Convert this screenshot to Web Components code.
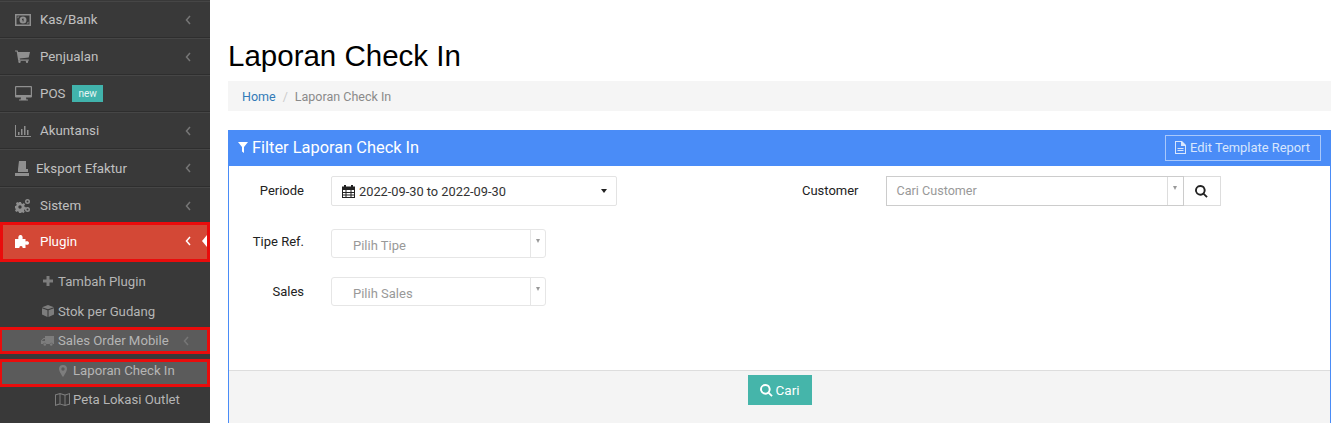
<!DOCTYPE html>
<html>
<head>
<meta charset="utf-8">
<title>Laporan Check In</title>
<style>
    html, body { margin: 0; height: 100%; overflow: hidden; background: #fff; }
    body { font-family: Roboto, "Liberation Sans", sans-serif; font-size: 13px; }
    app-shell { height: 423px; }
</style>
</head>
<body>

<app-shell>
    <side-bar slot="side">
        <side-item icon="money" label="Kas/Bank" arrow></side-item>
        <side-item icon="cart" label="Penjualan" arrow></side-item>
        <side-item icon="desktop" label="POS" badge="new"></side-item>
        <side-item icon="chart" label="Akuntansi" arrow></side-item>
        <side-item icon="export" label="Eksport Efaktur" arrow tight></side-item>
        <side-item icon="cogs" label="Sistem" arrow></side-item>
        <side-item icon="puzzle" label="Plugin" arrow active></side-item>
        <sub-item icon="plus" label="Tambah Plugin" style="margin-top:4px"></sub-item>
        <sub-item icon="cube" label="Stok per Gudang"></sub-item>
        <sub-item icon="truck" label="Sales Order Mobile" arrow marked style="margin-top:1px"></sub-item>
        <sub-item icon="pin" label="Laporan Check In" level="2" marked style="margin-top:5px"></sub-item>
        <sub-item icon="map" label="Peta Lokasi Outlet" level="2"></sub-item>
    </side-bar>
    <page-head title-text="Laporan Check In" crumb="Laporan Check In"></page-head>
    <filter-panel heading="Filter Laporan Check In">
        <div slot="left">
            <form-row label="Periode" gap="23"><date-range value="2022-09-30 to 2022-09-30"></date-range></form-row>
            <form-row label="Tipe Ref." gap="19" tight><pick-box text="Pilih Tipe"></pick-box></form-row>
            <form-row label="Sales"><pick-box text="Pilih Sales"></pick-box></form-row>
        </div>
        <div slot="right">
            <form-row label="Customer" wide><search-box text="Cari Customer"></search-box></form-row>
        </div>
    </filter-panel>
</app-shell>

<script>
const ICONS = {
    money: '<svg width="16" height="12" viewBox="0 0 16 12"><path fill-rule="evenodd" d="M0 0h16v12H0zM1.500 1.500v9h13v-9z"/><path fill-rule="evenodd" d="M8 2.500a3.500 3.500 0 1 1 0 7 3.500 3.500 0 0 1 0-7zM7 5v1h.6v1.600h1V4.400h-.8z"/><path d="M2.500 2.500h2l-2 2zM13.500 9.500h-2l2-2z"/></svg>',
    cart: '<svg width="15" height="13" viewBox="0 0 15 13"><path d="M0 .5h2.600l.5 1.500H15l-1.300 5.600-9 1 .3 1h8.800v1.100H3.200L1.700 1.600H0z"/><circle cx="4.500" cy="11.800" r="1.200"/><circle cx="12" cy="11.800" r="1.200"/></svg>',
    desktop: '<svg width="17" height="15" viewBox="0 0 17 15"><path fill-rule="evenodd" d="M1 0h15a1 1 0 0 1 1 1v9.500a1 1 0 0 1-1 1h-5l.4 2h1.600v1H4v-1h1.600l.4-2H1a1 1 0 0 1-1-1V1a1 1 0 0 1 1-1zm.2 1.200v7.800h14.600V1.200z"/></svg>',
    chart: '<svg width="16" height="12" viewBox="0 0 16 12"><path d="M0 0h1v11h15v1H0zM3 7h1.500v3H3zM6 4h1.500v6H6zM9 1h1.500v9H9zM12 5h1.500v5H12z"/></svg>',
    export: '<svg width="14" height="15" viewBox="0 0 14 15"><path d="M4 0h7v8l2 0v3H3V8zM0 12h14v3H0z"/><path d="M5 10 9 5v5z" opacity=".5"/></svg>',
    cogs: '<svg width="16" height="14" viewBox="0 0 16 14"><path fill-rule="evenodd" d="M4 3h2l.3 1.300 1.300.6L8.800 4l1.300 1.500-.9 1 .3 1.200 1.300.4v2l-1.300.3-.5 1.300.8 1.100-1.500 1.300-1-.8-1.300.4L6 14H4l-.3-1.300-1.300-.5-1.100.8L0 11.500l.8-1-.5-1.300L0 9V7l1.200-.3.5-1.300-.8-1.100L2.300 3l1.100.8zM5 6.300a1.700 1.700 0 1 0 0 3.400 1.700 1.700 0 0 0 0-3.400z"/><path fill-rule="evenodd" d="M12.500 0a2.500 2.500 0 1 1 0 5 2.500 2.500 0 0 1 0-5zm0 1.500a1 1 0 1 0 0 2 1 1 0 0 0 0-2zM12.500 8a2.500 2.500 0 1 1 0 5 2.500 2.500 0 0 1 0-5zm0 1.500a1 1 0 1 0 0 2 1 1 0 0 0 0-2z"/></svg>',
    puzzle: '<svg width="14" height="13" viewBox="0 0 14 13"><path d="M0 4h3.500C3 2.500 3.500 0 5.500 0S8 2.500 7.500 4H10.500v2.500c1-.6 3.500-.6 3.500 1.500s-2.500 2-3.500 1.500V13H7.500c.5-1-.2-2-1.500-2s-2 1-1.500 2H0z"/></svg>',
    plus: '<svg width="10" height="10" viewBox="0 0 10 10"><path d="M3.500 0h3v3.500H10v3H6.500V10h-3V6.500H0v-3h3.500z"/></svg>',
    cube: '<svg width="12" height="12" viewBox="0 0 11 11"><path d="M5.500 0 11 2 5.500 4 0 2zM0 3l5 1.800V11L0 8.800zM11 3 6 4.800V11l5-2.200z"/></svg>',
    truck: '<svg width="13" height="10" viewBox="0 0 13 10"><path d="M4 0h9v8h-1.200a1.600 1.600 0 0 0-3.100 0H5.300a1.600 1.600 0 0 0-3.100 0H0V4.500L2.500 2H4zM1 4.800V5h3V3H2.800z"/><circle cx="3.800" cy="8.500" r="1.300"/><circle cx="10.200" cy="8.500" r="1.300"/></svg>',
    pin: '<svg width="8" height="12" viewBox="0 0 8 12"><path fill-rule="evenodd" d="M4 0a4 4 0 0 1 4 4c0 2-2.500 6-4 8-1.500-2-4-6-4-8a4 4 0 0 1 4-4zm0 2.300a1.700 1.700 0 1 0 0 3.400 1.700 1.700 0 0 0 0-3.400z"/></svg>',
    map: '<svg width="15" height="13" viewBox="0 0 15 13"><path fill-rule="evenodd" d="M0 1.500 5 0l5 1.500L15 0v11.500L10 13l-5-1.500L0 13zM1 2.300v9.300l3.500-1V1.300zm4.500-1v9.400l4 1.100V2.400zm5 1.100v9.300l3.500-1V1.300z"/></svg>'
};
const SEARCH = '<svg width="13" height="13" viewBox="0 0 13 13"><path fill="currentColor" fill-rule="evenodd" d="M5.300 0a5.300 5.300 0 0 1 4.300 8.400l3.100 3.100-1.300 1.300-3.100-3.100A5.300 5.300 0 1 1 5.300 0zm0 1.900a3.400 3.400 0 1 0 0 6.800 3.400 3.400 0 0 0 0-6.800z"/></svg>';
const ARROW = '<svg class="arrow" width="6" height="10" viewBox="0 0 6 10"><path d="M5 1 1.500 5 5 9" fill="none" stroke="currentColor" stroke-width="1.500"/></svg>';

function make(tag, html) {
    customElements.define(tag, class extends HTMLElement {
        connectedCallback() {
            if (this.shadowRoot) return;
            this.attachShadow({ mode: 'open' }).innerHTML = html(this);
        }
    });
}

customElements.define('app-shell', class extends HTMLElement {
    constructor() {
        super();
        this.attachShadow({ mode: 'open' }).innerHTML = `
            <style>
                :host { display: flex; }
                .side { flex: 0 0 210px; }
                .main { flex: 1; min-width: 0; padding-left: 18px; display: flex; flex-direction: column; }
            </style>
            <div class="side"><slot name="side"></slot></div>
            <div class="main"><slot></slot></div>`;
    }
});

make('side-bar', () => `
    <style>
        :host { display: block; height: 423px; background: #393939; padding-top: 1px; box-sizing: border-box; overflow: hidden; }
    </style>
    <slot></slot>`);

make('side-item', el => `
    <style>
        :host { display: block; }
        :host([tight]) .row { height: 36px; }
        .row {
            height: 35px; display: flex; align-items: center; color: #c0c0c0; font-size: 13.300px;
            border-bottom: 1px solid #2e2e2e; border-top: 1px solid #464646; padding-left: 15px; position: relative;
        }
        .icon { width: 25px; display: flex; color: #8f8f8f; }
        .icon svg { fill: currentColor; }
        :host([tight]) .icon { width: 21px; }
        .label { flex: 1; display: flex; align-items: center; }
        .badge { background: #41b3ac; color: #e6f5f4; font-size: 10px; height: 17px; line-height: 18px; padding: 0 6px; margin-left: 7px; }
        .arrow { color: #767676; margin-right: 19px; }
        :host([active]) .row {
            height: 32px; padding-bottom: 2px; margin-top: -2px; background: #d34836; color: #fff; border: 3px solid #e90c0c; padding-left: 12px;
        }
        :host([active]) .row .icon { color: #fff; }
        :host([active]) .row .arrow { color: #fff; margin-right: 16px; }
        .notch { position: absolute; right: 0; top: 10px; border-right: 5px solid #fff; border-top: 6px solid transparent; border-bottom: 6px solid transparent; }
    </style>
    <div class="row">
        <span class="icon">${ICONS[el.getAttribute('icon')]}</span>
        <span class="label">${el.getAttribute('label')}${el.hasAttribute('badge') ? `<span class="badge">${el.getAttribute('badge')}</span>` : ''}</span>
        ${el.hasAttribute('arrow') ? ARROW : ''}
        ${el.hasAttribute('active') ? '<i class="notch"></i>' : ''}
    </div>`);

make('sub-item', el => {
    const deep = el.getAttribute('level') === '2';
    return `
    <style>
        :host { display: block; }
        .row { height: ${deep ? 25 : 30}px; box-sizing: border-box; display: flex; align-items: center; color: #b5b5b5; font-size: 13.200px; padding-left: ${deep ? 52 : 37}px; }
        :host([marked]) .row { height: ${deep ? 28 : 27}px; background: #5b5b5b; border: 3px solid #e90c0c; border-left-width: 2px; padding-left: ${deep ? 50 : 35}px; ${deep ? 'padding-bottom: 5px;' : ''} }
        .icon { width: 21px; display: flex; justify-content: center; color: #7d7d7d; }
        .icon svg { fill: currentColor; }
        .label { flex: 1; }
        .arrow { color: #767676; margin-right: 18px; }
    </style>
    <div class="row">
        <span class="icon">${ICONS[el.getAttribute('icon')]}</span>
        <span class="label">${el.getAttribute('label')}</span>
        ${el.hasAttribute('arrow') ? ARROW : ''}
    </div>`;
});

make('page-head', el => `
    <style>
        :host { display: block; padding-top: 39px; }
        h1 { margin: 0 0 8px; font: 400 29.500px/34px "Liberation Sans", sans-serif; color: #000; }
        ol { margin: 0; padding: 0 14px; height: 30px; list-style: none; display: flex; align-items: center; background: #f5f5f5; color: #8a8a8a; font-size: 12.500px; }
        a { color: #337ab7; text-decoration: none; }
        .sep { color: #ccc; padding: 0 7px; }
    </style>
    <h1>${el.getAttribute('title-text')}</h1>
    <ol><li><a href="#">Home</a></li><li class="sep">/</li><li>${el.getAttribute('crumb')}</li></ol>`);

make('filter-panel', el => `
    <style>
        :host { display: block; margin-top: 19px; border: 1px solid #4a8cf7; border-top: 0; border-bottom: 0; flex: 1; }
        header { height: 36px; margin: 0 -1px; background: #4a8cf7; display: flex; align-items: center; color: #fff; padding: 0 10px; font-size: 16.400px; }
        .title { flex: 1; display: flex; align-items: center; gap: 4px; padding-bottom: 2px; }
        .tpl { display: flex; align-items: center; gap: 4px; height: 26px; box-sizing: border-box; padding-bottom: 1px; border: 1px solid #a9c8fb; color: #d8e6fd; font-size: 12.900px; padding-left: 9px; padding-right: 10px; }
        .body { height: 204px; box-sizing: border-box; padding-top: 10px; display: grid; grid-template-columns: 1fr 1fr; }
        footer { background: #f4f4f4; border-top: 1px solid #ddd; height: 60px; display: flex; justify-content: center; padding-top: 4px; box-sizing: border-box; }
        button { height: 30px; width: 64px; border: 0; background: #45b5aa; color: #fff; font: 13.500px Roboto, sans-serif; display: flex; align-items: center; justify-content: center; gap: 3px; padding: 0; }
    </style>
    <header>
        <span class="title">
            <svg width="10" height="11" viewBox="0 0 10 11"><path fill="#fff" d="M0 0h10L6 5v6L4 9.500V5z"/></svg>
            ${el.getAttribute('heading')}
        </span>
        <span class="tpl">
            <svg width="11" height="13" viewBox="0 0 11 13"><path fill="currentColor" fill-rule="evenodd" d="M0 0h7l4 4v9H0zm1 1v11h9V5H6V1zm1.500 6h6v1h-6zm0 2h6v1h-6z"/></svg>
            Edit Template Report
        </span>
    </header>
    <div class="body">
        <slot name="left"></slot>
        <slot name="right"></slot>
    </div>
    <footer><button>${SEARCH}Cari</button></footer>`);

make('form-row', el => `
    <style>
        :host { display: grid; grid-template-columns: ${el.hasAttribute('wide') ? '79px' : '75px'} 1fr; column-gap: 27px; margin-bottom: ${el.getAttribute('gap') || 0}px; }
        label { text-align: right; color: #222; font-size: 13px; line-height: ${el.hasAttribute('tight') ? 26 : 29}px; height: 29px; }
    </style>
    <label>${el.getAttribute('label')}</label>
    <div><slot></slot></div>`);

make('date-range', el => `
    <style>
        :host { display: flex; width: 286px; height: 30px; box-sizing: border-box; align-items: center; border: 1px solid #e3e3e3; border-radius: 2px; padding: 0 9px 0 10px; color: #333; font-size: 12.800px; gap: 4px; }
        svg { flex: none; }
        span { flex: 1; }
        i { border-top: 4px solid #222; border-left: 3px solid transparent; border-right: 3px solid transparent; }
    </style>
    <svg width="13" height="13" viewBox="0 0 13 13"><path fill="#222" fill-rule="evenodd" d="M2 0h2v1.500h5V0h2v1.500h2V13H0V1.500h2zM1 5v2h2.500V5zm3.500 0v2h4V5zm5 0v2H12V5zM1 8v1.500h2.500V8zm3.500 0v1.500h4V8zm5 0v1.500H12V8zM1 10.500V12h2.500v-1.500zm3.500 0V12h4v-1.500zm5 0V12H12v-1.500z"/></svg>
    <span>${el.getAttribute('value')}</span><i></i>`);

make('pick-box', el => `
    <style>
        :host { display: flex; width: 215px; height: 29px; box-sizing: border-box; border: 1px solid #e6e6e6; border-radius: 3px; color: #999; font-size: 13px; }
        span { flex: 1; padding: 3px 0 0 21px; line-height: 26px; }
        b { width: 15px; border-left: 1px solid #e6e6e6; display: flex; justify-content: center; padding-top: 9px; box-sizing: border-box; }
        i { width: 0; height: 0; border-top: 4px solid #999; border-left: 2.500px solid transparent; border-right: 2.500px solid transparent; }
    </style>
    <span>${el.getAttribute('text')}</span><b><i></i></b>`);

make('search-box', el => `
    <style>
        :host { display: flex; width: 335px; height: 30px; box-sizing: border-box; color: #999; font-size: 12.600px; }
        .field { width: 298px; box-sizing: border-box; display: flex; border: 1px solid #ccc; }
        span { flex: 1; padding-left: 10px; line-height: 28px; }
        b { width: 16px; border-left: 1px solid #ddd; display: flex; justify-content: center; padding-top: 9px; box-sizing: border-box; }
        i { width: 0; height: 0; border-top: 4px solid #999; border-left: 2.500px solid transparent; border-right: 2.500px solid transparent; }
        .go { width: 37px; box-sizing: border-box; border: 1px solid #ddd; border-left: 0; display: flex; align-items: center; justify-content: center; color: #222; }
    </style>
    <div class="field"><span>${el.getAttribute('text')}</span><b><i></i></b></div>
    <div class="go">${SEARCH}</div>`);
</script>
</body>
</html>
